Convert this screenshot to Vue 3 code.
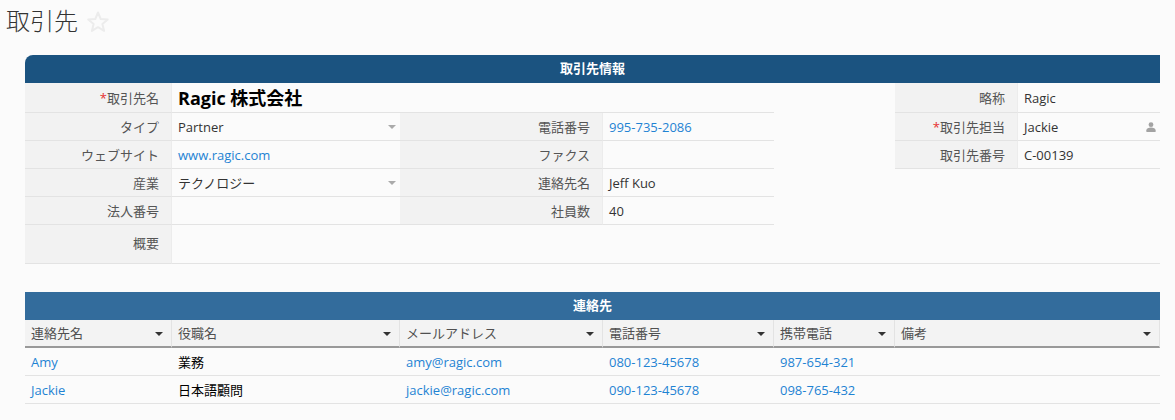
<script setup>
const columns = ['連絡先名', '役職名', 'メールアドレス', '電話番号', '携帯電話', '備考']
const contacts = [
  { name: 'Amy', title: '業務', email: 'amy@ragic.com', phone: '080-123-45678', mobile: '987-654-321' },
  { name: 'Jackie', title: '日本語顧問', email: 'jackie@ragic.com', phone: '090-123-45678', mobile: '098-765-432' }
]
</script>

<template>
  <div class="page">
    <header class="title-row">
      <h1>取引先</h1>
      <svg class="star" viewBox="0 0 22 22" width="22" height="22" aria-hidden="true">
        <polygon points="11,1.5 13.7,8 20.7,8.5 15.4,13 17.1,19.9 11,16.2 4.9,19.9 6.6,13 1.3,8.5 8.3,8" fill="none" stroke="#ececec" stroke-width="2" stroke-linejoin="round" />
      </svg>
    </header>

    <section class="info">
      <div class="band dark">取引先情報</div>
      <div class="form">
        <div class="label"><span class="req">*</span>取引先名</div>
        <div class="value name span3">Ragic 株式会社</div>
        <div class="gap"></div>
        <div class="label">略称</div>
        <div class="value">Ragic</div>

        <div class="label">タイプ</div>
        <div class="value select">Partner<i class="caret"></i></div>
        <div class="label">電話番号</div>
        <div class="value"><a>995-735-2086</a></div>
        <div class="gap"></div>
        <div class="label"><span class="req">*</span>取引先担当</div>
        <div class="value select">Jackie
          <svg class="person" viewBox="0 0 10 10" width="10" height="10" aria-hidden="true">
            <circle cx="5" cy="2.7" r="2.4" fill="#a3a3a3" />
            <path d="M0.4 10 V8.2 C0.4 6.4 2.6 5.6 5 5.6 C7.4 5.6 9.6 6.4 9.6 8.2 V10 Z" fill="#a3a3a3" />
          </svg>
        </div>

        <div class="label">ウェブサイト</div>
        <div class="value"><a>www.ragic.com</a></div>
        <div class="label">ファクス</div>
        <div class="value"></div>
        <div class="gap"></div>
        <div class="label">取引先番号</div>
        <div class="value">C-00139</div>

        <div class="label">産業</div>
        <div class="value select">テクノロジー<i class="caret"></i></div>
        <div class="label">連絡先名</div>
        <div class="value">Jeff Kuo</div>
        <div class="gap span3"></div>

        <div class="label">法人番号</div>
        <div class="value"></div>
        <div class="label">社員数</div>
        <div class="value">40</div>
        <div class="gap span3"></div>

        <div class="label tall">概要</div>
        <div class="value tall span6"></div>
      </div>
    </section>

    <section class="contacts">
      <div class="band mid">連絡先</div>
      <div class="table">
        <div v-for="c in columns" :key="c" class="th">{{ c }}<i class="sort"></i></div>
        <template v-for="row in contacts" :key="row.name">
          <div class="td"><a>{{ row.name }}</a></div>
          <div class="td black">{{ row.title }}</div>
          <div class="td"><a>{{ row.email }}</a></div>
          <div class="td"><a>{{ row.phone }}</a></div>
          <div class="td"><a>{{ row.mobile }}</a></div>
          <div class="td"></div>
        </template>
      </div>
    </section>
  </div>
</template>

<style>
html, body { margin: 0; background: #fbfbfb; }
</style>

<style scoped>
.page {
  width: 1175px;
  height: 420px;
  overflow: hidden;
  box-sizing: border-box;
  background: #fbfbfb;
  font: 13px/18px "Open Sans", "Noto Sans CJK JP", sans-serif;
  color: #333;
}
.title-row {
  display: flex;
  align-items: flex-start;
  gap: 8px;
  height: 45px;
  padding-left: 6px;
}
h1 {
  margin: 0;
  font-size: 24px;
  line-height: 41px;
  font-weight: 300;
  color: #333;
  width: 73px;
}
.star { margin-top: 11px; }
.info, .contacts { margin: 0 15px 0 25px; width: 1135px; }
.info { margin-top: 10px; }
.contacts { margin-top: 28px; }
.band {
  height: 28px;
  line-height: 27px;
  text-align: center;
  color: #fff;
  font-weight: 700;
}
.dark { background: #1b5380; border-top-left-radius: 8px; }
.mid { background: #336c9c; }
.form {
  display: grid;
  grid-template-columns: 147px 228px 203px 171px 121px 123px 142px;
  grid-template-rows: 30px 28px 28px 28px 28px 39px;
}
.label, .value {
  box-sizing: border-box;
  border-bottom: 1px solid #e3e3e3;
  display: flex;
  align-items: center;
}
.label {
  justify-content: flex-end;
  padding-right: 12px;
  background: #f2f2f2;
  border-right: 1px solid #ececec;
  color: #555;
}
.value { padding-left: 6px; position: relative; color: #333; }
.select { justify-content: space-between; padding-right: 4px; }
.name { font-size: 18px; font-weight: 700; color: #000; }
.span3 { grid-column: span 3; }
.span6 { grid-column: span 6; }
.tall { padding-bottom: 2px; }
.req { color: #e63030; }
a { color: #1f83d3; text-decoration: none; }
.caret {
  width: 0;
  height: 0;
  border-left: 4px solid transparent;
  border-right: 4px solid transparent;
  border-top: 4px solid #aaa;
}
.person { margin-right: 0; }
.table {
  display: grid;
  grid-template-columns: 147px 228px 203px 171px 121px 265px;
}
.th {
  box-sizing: border-box;
  height: 28px;
  display: flex;
  align-items: center;
  justify-content: space-between;
  padding: 0 8px 1px 6px;
  background: #f3f3f3;
  border-right: 1px solid #e3e3e3;
  border-bottom: 2px solid #999;
  color: #505050;
}
.sort {
  width: 0;
  height: 0;
  margin-top: 2px;
  border-left: 4.5px solid transparent;
  border-right: 4.5px solid transparent;
  border-top: 4.5px solid #333;
}
.td {
  box-sizing: border-box;
  height: 28px;
  padding: 5px 6px 0;
  border-bottom: 1px solid #e3e3e3;
}
.black { color: #000; }
</style>
